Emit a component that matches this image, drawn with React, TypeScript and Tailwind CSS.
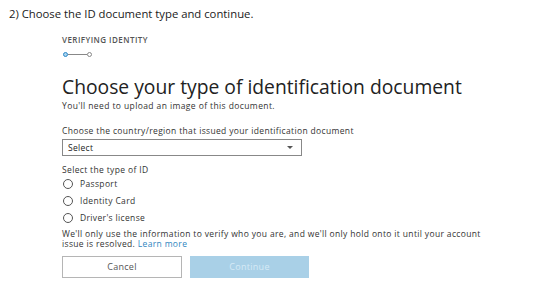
const font = { fontFamily: '"Open Sans", "Noto Sans", sans-serif' };

function Radio({ label }: { label: string }) {
  return (
    <label className="flex h-[17px] items-center gap-[7px]">
      <span className="ml-[1px] h-[10px] w-[10px] rounded-full border border-[#555]" />
      <span className="text-[8.5px] leading-[10px] tracking-[0.35px] text-[#333]">{label}</span>
    </label>
  );
}

export default function App() {
  return (
    <main className="h-[303px] w-[559px] bg-white text-[#222]" style={font}>
      <h1 className="pl-[9px] pt-[6px] text-[11.3px] leading-[16px] text-[#1a1a1a]">
        2) Choose the ID document type and continue.
      </h1>

      <section className="pl-[62px]">
        <div className="mt-[13px] text-[8px] font-semibold leading-[10px] tracking-[0.45px] text-[#555]">
          VERIFYING IDENTITY
        </div>
        <div className="mt-[6px] flex h-[6px] items-center">
          <span className="ml-[1px] h-[5px] w-[5px] rounded-full border border-[#2b88c8] bg-[#a9d3ee]" />
          <span className="h-px w-[19px] bg-[#888]" />
          <span className="h-[5px] w-[5px] rounded-full border border-[#888]" />
        </div>

        <h2 className="mt-[18px] text-[19.3px] leading-[24px] text-[#222]">
          Choose your type of identification document
        </h2>
        <p className="mt-[2px] text-[8.5px] font-medium leading-[10px] tracking-[0.4px] text-[#333]">
          You'll need to upload an image of this document.
        </p>

        <div className="mt-[15px] text-[8.5px] leading-[10px] tracking-[0.35px] text-[#333]">
          Choose the country/region that issued your identification document
        </div>
        <div className="mt-[3px] flex h-[17px] w-[240px] items-center justify-between border border-[#888] pl-[5px] pr-[8px]">
          <span className="text-[8.5px] leading-[10px] tracking-[0.3px] text-[#222]">Select</span>
          <span className="h-0 w-0 border-x-[3px] border-t-[3px] border-x-transparent border-t-[#555]" />
        </div>

        <div className="mt-[9px] text-[8.5px] leading-[10px] tracking-[0.35px] text-[#333]">
          Select the type of ID
        </div>
        <div className="flex flex-col">
          <Radio label="Passport" />
          <Radio label="Identity Card" />
          <Radio label="Driver's license" />
        </div>

        <p className="mt-[3px] text-[8.5px] font-medium leading-[10px] tracking-[0.35px] text-[#333]">
          We'll only use the information to verify who you are, and we'll only hold onto it until your account
          <br />
          issue is resolved. <span className="text-[#2f86c0]">Learn more</span>
        </p>

        <div className="mt-[7px] flex gap-[8px]">
          <button className="h-[22px] w-[120px] border border-[#b5b5b5] bg-white text-[9px] tracking-[0.3px] text-[#555]">
            Cancel
          </button>
          <button className="h-[22px] w-[119px] bg-[#a9d0e7] text-[9px] tracking-[0.3px] text-[#d6eaf6]">
            Continue
          </button>
        </div>
      </section>
    </main>
  );
}
